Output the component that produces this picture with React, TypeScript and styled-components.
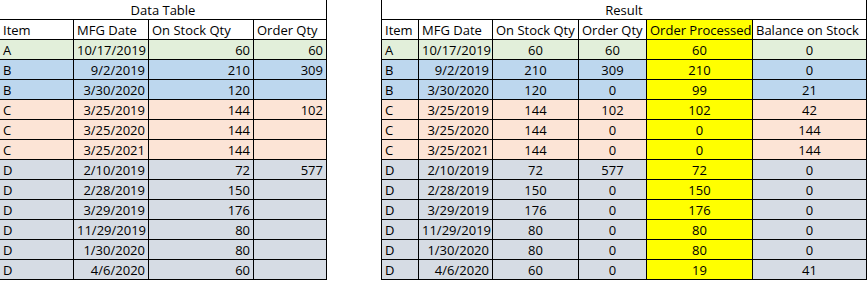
import React from "react";
import styled, { createGlobalStyle } from "styled-components";

const GlobalStyle = createGlobalStyle`
  body {
    margin: 0;
    background: #ffffff;
    font-family: "Open Sans", "Liberation Sans", sans-serif;
    color: #000000;
  }
`;

const rowColors: Record<string, string> = {
  A: "#e2efda",
  B: "#bdd7ee",
  C: "#fce4d6",
  D: "#d6dce4",
};

const dataRows = [
  { item: "A", date: "10/17/2019", stock: 60, order: 60, processed: 60, balance: 0 },
  { item: "B", date: "9/2/2019", stock: 210, order: 309, processed: 210, balance: 0 },
  { item: "B", date: "3/30/2020", stock: 120, order: null, processed: 99, balance: 21 },
  { item: "C", date: "3/25/2019", stock: 144, order: 102, processed: 102, balance: 42 },
  { item: "C", date: "3/25/2020", stock: 144, order: null, processed: 0, balance: 144 },
  { item: "C", date: "3/25/2021", stock: 144, order: null, processed: 0, balance: 144 },
  { item: "D", date: "2/10/2019", stock: 72, order: 577, processed: 72, balance: 0 },
  { item: "D", date: "2/28/2019", stock: 150, order: null, processed: 150, balance: 0 },
  { item: "D", date: "3/29/2019", stock: 176, order: null, processed: 176, balance: 0 },
  { item: "D", date: "11/29/2019", stock: 80, order: null, processed: 80, balance: 0 },
  { item: "D", date: "1/30/2020", stock: 80, order: null, processed: 80, balance: 0 },
  { item: "D", date: "4/6/2020", stock: 60, order: null, processed: 19, balance: 41 },
];

const Page = styled.div`
  display: flex;
  gap: 54px;
  align-items: flex-start;
`;

const Sheet = styled.div<{ $cols: string; $leftBorder?: boolean }>`
  display: grid;
  grid-template-columns: ${(p) => p.$cols};
  grid-auto-rows: 20px;
  border-left: ${(p) => (p.$leftBorder ? "1px solid #000" : "none")};
  font-size: 13px;
`;

const Title = styled.div`
  grid-column: 1 / -1;
  border-right: 1px solid #000;
  border-bottom: 1px solid #000;
  text-align: center;
  padding-top: 1px;
  line-height: 19px;
  white-space: nowrap;
  overflow: hidden;
`;

const Cell = styled.div<{ $bg?: string; $align?: string }>`
  box-sizing: border-box;
  border-right: 1px solid #000;
  border-bottom: 1px solid #000;
  background: ${(p) => p.$bg || "#ffffff"};
  text-align: ${(p) => p.$align || "left"};
  padding: 1px 3px 0;
  line-height: 19px;
  white-space: nowrap;
  overflow: hidden;
`;

const YELLOW = "#ffff00";

export default function App() {
  return (
    <>
      <GlobalStyle />
      <Page>
        <Sheet $cols="74px 75px 105px 73px">
          <Title>Data Table</Title>
          <Cell>Item</Cell>
          <Cell>MFG Date</Cell>
          <Cell>On Stock Qty</Cell>
          <Cell>Order Qty</Cell>
          {dataRows.map((r, i) => (
            <React.Fragment key={i}>
              <Cell $bg={rowColors[r.item]}>{r.item}</Cell>
              <Cell $bg={rowColors[r.item]} $align="right">{r.date}</Cell>
              <Cell $bg={rowColors[r.item]} $align="right">{r.stock}</Cell>
              <Cell $bg={rowColors[r.item]} $align="right">{r.order ?? ""}</Cell>
            </React.Fragment>
          ))}
        </Sheet>

        <Sheet $cols="37px 74px 86px 68px 106px 114px" $leftBorder>
          <Title>Result</Title>
          <Cell>Item</Cell>
          <Cell>MFG Date</Cell>
          <Cell>On Stock Qty</Cell>
          <Cell>Order Qty</Cell>
          <Cell $bg={YELLOW}>Order Processed</Cell>
          <Cell>Balance on Stock</Cell>
          {dataRows.map((r, i) => (
            <React.Fragment key={i}>
              <Cell $bg={rowColors[r.item]}>{r.item}</Cell>
              <Cell $bg={rowColors[r.item]} $align="right">{r.date}</Cell>
              <Cell $bg={rowColors[r.item]} $align="center">{r.stock}</Cell>
              <Cell $bg={rowColors[r.item]} $align="center">{r.order ?? 0}</Cell>
              <Cell $bg={YELLOW} $align="center">{r.processed}</Cell>
              <Cell $bg={rowColors[r.item]} $align="center">{r.balance}</Cell>
            </React.Fragment>
          ))}
        </Sheet>
      </Page>
    </>
  );
}
